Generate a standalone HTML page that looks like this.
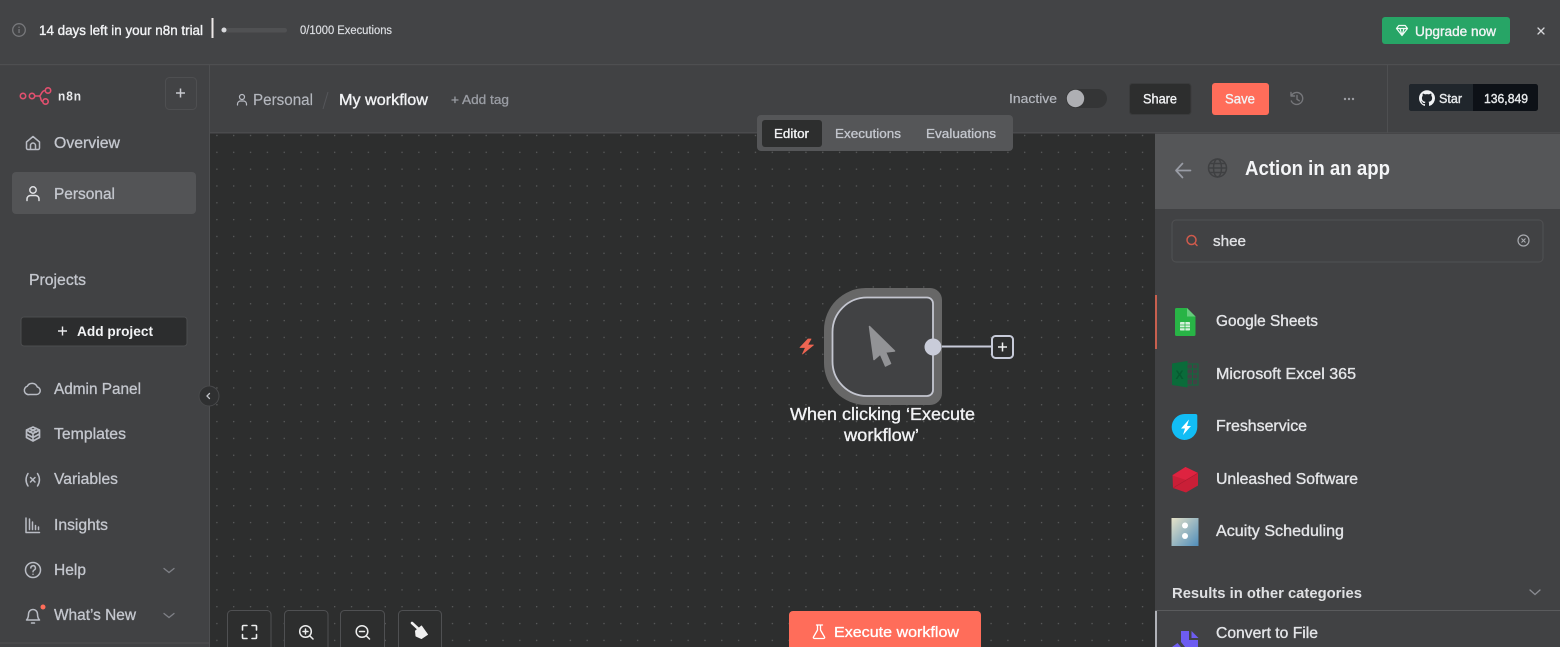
<!DOCTYPE html>
<html lang="en"><head><meta charset="utf-8"><title>n8n workflow</title>
<style>
html,body{margin:0;padding:0;width:1560px;height:647px;overflow:hidden;background:#414244}
svg{display:block;filter:blur(.35px)}
text{font-family:"Liberation Sans",sans-serif;fill:#c4c7ce;stroke:currentColor}
.m{stroke:#c4c7ce;stroke-width:.3}
.w{fill:#f2f3f5;stroke:#f2f3f5;stroke-width:.35}
.n{stroke:none}
.ic{fill:none;stroke:#b9bcc4;stroke-width:1.5;stroke-linecap:round;stroke-linejoin:round}
</style></head><body>
<svg width="1560" height="647" viewBox="0 0 1560 647" xmlns="http://www.w3.org/2000/svg">
<defs><pattern id="d" x="216.2" y="134.8" width="16.83" height="16.83" patternUnits="userSpaceOnUse"><circle cx=".7" cy=".7" r=".65" fill="#626364"/></pattern>
<linearGradient id="ac" x1="0" y1="0" x2="1" y2="1"><stop offset="0" stop-color="#e6e2c8"/><stop offset="1" stop-color="#4f8dbb"/></linearGradient></defs>
<rect width="1560" height="647" fill="#414244"/>
<rect width="1560" height="64" fill="#434446"/>
<rect y="64" width="1560" height="1.2" fill="#4e4f51"/>
<!-- canvas -->
<rect x="210" y="133" width="945" height="514" fill="#2d2e2e"/>
<rect x="210" y="133" width="945" height="514" fill="url(#d)"/>
<rect x="209" y="65" width="1" height="582" fill="#4e4f51"/>
<rect x="210" y="132" width="1350" height="1.5" fill="#4a4b4d"/>
<!-- top bar -->
<circle cx="19" cy="30" r="6.300" fill="none" stroke="#77787b" stroke-width="1.3"/><rect x="18.4" y="29" width="1.3" height="4" fill="#77787b"/><rect x="18.4" y="26.6" width="1.3" height="1.3" fill="#77787b"/>
<text x="39" y="35" font-size="13.500" textLength="164" lengthAdjust="spacingAndGlyphs" class="w">14 days left in your n8n trial</text>
<rect x="211.5" y="18" width="2" height="20" fill="#ece7e7"/>
<rect x="221" y="28" width="66" height="4.5" rx="2.2" fill="#505153"/><circle cx="224" cy="30" r="2.5" fill="#d8d9dc"/>
<text x="300" y="34" font-size="11.500" textLength="92" lengthAdjust="spacingAndGlyphs" class="m" style="fill:#dcdee2;stroke:#dcdee2;stroke-width:.2">0/1000 Executions</text>
<rect x="1382" y="17" width="128" height="27" rx="3" fill="#27a566"/>
<path d="M1396.500 28.500l2.300-3h6.400l2.300 3-5.500 7zM1396.500 28.500h11M1400 28.500l2 7 2-7" fill="none" stroke="#f1faf5" stroke-width="1.2" stroke-linejoin="round"/>
<text x="1415" y="36" font-size="13.500" textLength="81" lengthAdjust="spacingAndGlyphs" class="w">Upgrade now</text>
<path d="M1538 28l6 6M1544 28l-6 6" stroke="#d6d7da" stroke-width="1.3" stroke-linecap="round"/>
<!-- sidebar -->
<g fill="none" stroke="#e2506f" stroke-width="1.6"><circle cx="23" cy="96" r="2.700"/><circle cx="32" cy="96" r="2.700"/><circle cx="48" cy="90.500" r="2.700"/><circle cx="45.500" cy="101.500" r="2.700"/><path d="M35 96h4c2.500 0 2-5.500 6.300-5.500M39 96c2.500 0 1 5.500 3.800 5.500"/></g>
<text x="58" y="100.500" font-size="12.500" font-weight="bold" textLength="24" lengthAdjust="spacingAndGlyphs" class="n" style="fill:#e8e9eb;letter-spacing:1px">n8n</text>
<rect x="165.500" y="77.500" width="31" height="32" rx="4" fill="#424345" stroke="#4e4f51"/>
<path d="M180.500 88.500v9M176 93h9" stroke="#c8cacf" stroke-width="1.500"/>
<path class="ic" d="M26.500 142l6.500-5.500 6.500 5.500v6a1.500 1.500 0 0 1-1.500 1.500h-10a1.500 1.500 0 0 1-1.500-1.500zM30.500 149.500v-4a2.500 2.500 0 0 1 5 0v4"/>
<text x="54" y="148" font-size="15.500" textLength="66" lengthAdjust="spacingAndGlyphs" class="m">Overview</text>
<rect x="12" y="172" width="184" height="42" rx="4" fill="#535456"/>
<circle class="ic" style="stroke:#e0e1e4" cx="33" cy="190" r="3.200"/><path class="ic" style="stroke:#e0e1e4" d="M27 200.500v-1.500a3.500 3.500 0 0 1 3.500-3.500h5a3.500 3.500 0 0 1 3.500 3.500v1.500"/>
<text x="54" y="199" font-size="15.500" textLength="61" lengthAdjust="spacingAndGlyphs" class="m">Personal</text>
<text x="29" y="285" font-size="15.500" textLength="57" lengthAdjust="spacingAndGlyphs" class="m">Projects</text>
<rect x="21" y="317" width="166" height="29" rx="3" fill="#2c2d2e" stroke="#4c4d4f"/>
<path d="M62.500 326.500v9M58 331h9" stroke="#e8e9eb" stroke-width="1.400"/>
<text x="77" y="336" font-size="14" font-weight="bold" textLength="76" lengthAdjust="spacingAndGlyphs" class="n" style="fill:#f2f3f5">Add project</text>
<path class="ic" d="M29.500 394.500h7a3.800 3.800 0 0 0 .8-7.500 5.500 5.500 0 0 0-10-.8 4.300 4.300 0 0 0 2.200 8.300z"/>
<text x="54" y="394" font-size="15.500" textLength="87" lengthAdjust="spacingAndGlyphs" class="m">Admin Panel</text>
<path class="ic" style="stroke-width:1.700" d="M33 427l6.500 3v7.500L33 441l-6.500-3.500V430zM26.500 430l6.500 3.500 6.500-3.500M33 433.500V441M29.500 428.500l7 3.500M36.500 428.500l-7 3.500M26.500 434l6.500 3.500 6.500-3.500"/>
<text x="54" y="439" font-size="15.500" textLength="72" lengthAdjust="spacingAndGlyphs" class="m">Templates</text>
<path class="ic" d="M28 473.500c-2.500 4-2.500 8.500 0 12.500M37.500 473.500c2.500 4 2.500 8.500 0 12.500M30.500 477.500l4.500 4.500M35 477.500l-4.500 4.500"/>
<text x="54" y="484" font-size="15.500" textLength="64" lengthAdjust="spacingAndGlyphs" class="m">Variables</text>
<path class="ic" d="M26 518v14.500h13.500M29.500 519v10.500M32.500 522v7.500M35.500 525.500v4M38.500 527v2.500"/>
<text x="54" y="530" font-size="15.500" textLength="54" lengthAdjust="spacingAndGlyphs" class="m">Insights</text>
<circle class="ic" cx="33" cy="570" r="7.500"/><path class="ic" d="M30.800 568a2.300 2.300 0 1 1 3.400 2c-.8.500-1.200 1-1.200 1.800M33 574.200v.1"/>
<text x="54" y="575" font-size="15.500" textLength="32" lengthAdjust="spacingAndGlyphs" class="m">Help</text>
<path d="M164 568.500l5 4 5-4M164 613.500l5 4 5-4" fill="none" stroke="#7e8086" stroke-width="1.300" stroke-linecap="round"/>
<path class="ic" d="M26.500 620h13c-1.500-1.500-2-3-2-6a4.500 4.500 0 0 0-9 0c0 3-.5 4.500-2 6zM31.500 623h3"/><circle cx="43" cy="607" r="2.500" fill="#ff6d5a"/>
<text x="54" y="620" font-size="15.500" textLength="82" lengthAdjust="spacingAndGlyphs" class="m">What’s New</text>
<rect y="642.500" width="209" height="1" fill="#4e4f51"/>
<circle cx="209" cy="396" r="10" fill="#2f3031" stroke="#48494b"/><path d="M209.500 393.500l-2.500 2.500 2.500 2.500" fill="none" stroke="#c0c2c8" stroke-width="1.300" stroke-linecap="round"/>
<!-- header -->
<circle cx="242" cy="97" r="2.500" class="ic" style="stroke-width:1.200"/><path class="ic" style="stroke-width:1.200" d="M237.500 105v-1a3 3 0 0 1 3-3h3a3 3 0 0 1 3 3v1"/>
<text x="253" y="105" font-size="15.500" textLength="60" lengthAdjust="spacingAndGlyphs" style="stroke:#b4b7be;stroke-width:.15;fill:#b4b7be">Personal</text>
<path d="M328 92l-5 17" stroke="#55565a" stroke-width="1"/>
<text x="339" y="105" font-size="16" textLength="89" lengthAdjust="spacingAndGlyphs" class="w">My workflow</text>
<text x="451" y="104" font-size="13" textLength="58" lengthAdjust="spacingAndGlyphs" style="fill:#9a9da4;stroke:#9a9da4;stroke-width:.3">+ Add tag</text>
<text x="1009" y="103" font-size="13" textLength="48" lengthAdjust="spacingAndGlyphs" style="stroke:#b4b7be;stroke-width:.2;fill:#b4b7be">Inactive</text>
<rect x="1066" y="89" width="41" height="19" rx="9.500" fill="#343536"/><circle cx="1075.500" cy="98.500" r="8.700" fill="#aeafb3"/>
<rect x="1129.500" y="83.500" width="61.500" height="31" rx="3" fill="#2d2e2e" stroke="#3a3b3c"/>
<text x="1143" y="103.500" font-size="13.500" textLength="34" lengthAdjust="spacingAndGlyphs" class="w">Share</text>
<rect x="1212" y="83" width="57" height="32" rx="3" fill="#ff6d5a"/>
<text x="1225" y="103.500" font-size="13.500" textLength="30" lengthAdjust="spacingAndGlyphs" class="w">Save</text>
<path d="M1291.500 95.500a6 6 0 1 1-.2 5.500M1291 92.500v3.500h3.500M1297 95.500v3.800l2.300 1.500" fill="none" stroke="#76777b" stroke-width="1.400" stroke-linecap="round" stroke-linejoin="round"/>
<g fill="#9c9ea3"><circle cx="1345" cy="99" r="1.200"/><circle cx="1349" cy="99" r="1.200"/><circle cx="1353" cy="99" r="1.200"/></g>
<rect x="1387" y="65" width="1" height="68" fill="#4e4f51"/>
<rect x="1409" y="84" width="129" height="27" rx="2.500" fill="#0d1117"/>
<path d="M1411.500 84h61.500v27h-61.500a2.500 2.500 0 0 1-2.500-2.500v-22a2.500 2.500 0 0 1 2.500-2.500z" fill="#20262c"/>
<g transform="translate(1419 90.300)"><path fill="#f0f2f4" d="M8 0C3.580 0 0 3.580 0 8c0 3.540 2.290 6.530 5.470 7.590.4.070.55-.17.55-.38 0-.19-.01-.82-.01-1.490-2.010.37-2.530-.49-2.690-.94-.09-.23-.48-.94-.82-1.130-.28-.15-.68-.52-.01-.53.63-.01 1.080.58 1.230.82.720 1.210 1.870.87 2.330.66.070-.52.280-.87.510-1.070-1.780-.2-3.640-.89-3.640-3.950 0-.87.310-1.590.820-2.150-.08-.2-.36-1.020.08-2.120 0 0 .67-.21 2.200.82.640-.18 1.320-.27 2-.27s1.360.09 2 .27c1.530-1.040 2.200-.82 2.200-.82.440 1.100.16 1.920.08 2.120.51.560.82 1.270.82 2.150 0 3.070-1.870 3.750-3.650 3.950.29.25.54.73.54 1.480 0 1.070-.01 1.930-.01 2.200 0 .21.150.46.550.38A8.010 8.010 0 0 0 16 8c0-4.420-3.580-8-8-8z"/></g>
<text x="1439" y="103" font-size="12.500" textLength="23" lengthAdjust="spacingAndGlyphs" style="fill:#e6e8ea;stroke:#e6e8ea;stroke-width:.4">Star</text>
<text x="1484" y="103" font-size="12.500" textLength="44" lengthAdjust="spacingAndGlyphs" style="fill:#e6e8ea;stroke:#e6e8ea;stroke-width:.4">136,849</text>
<!-- tabs -->
<rect x="757" y="115" width="256" height="36" rx="4" fill="#555658"/>
<rect x="762" y="120" width="60" height="27" rx="3" fill="#2d2e2e"/>
<text x="774" y="138" font-size="13" textLength="35" lengthAdjust="spacingAndGlyphs" class="w">Editor</text>
<text x="835" y="138" font-size="13" textLength="66" lengthAdjust="spacingAndGlyphs" class="m">Executions</text>
<text x="926" y="138" font-size="13" textLength="70" lengthAdjust="spacingAndGlyphs" class="m">Evaluations</text>
<!-- node -->
<path d="M866 288h64a12 12 0 0 1 12 12v93a12 12 0 0 1-12 12h-64a42 42 0 0 1-42-42v-33a42 42 0 0 1 42-42z" fill="#676767"/>
<path d="M867 297.500h60a6 6 0 0 1 6 6v86.500a6 6 0 0 1-6 6h-60a34.500 34.500 0 0 1-34.500-34.500v-29.500a34.500 34.500 0 0 1 34.500-34.500z" fill="#414244" stroke="#c4c6d0" stroke-width="1.800"/>
<path d="M869.500 326.500l25 24.500-9 1 5 11.500-5 2.500-5.200-12-6.300 5.500z" fill="#929396" stroke="#929396" stroke-width="1.500" stroke-linejoin="round"/>
<path d="M942 346.500h49" stroke="#c7cbd9" stroke-width="2"/>
<circle cx="933" cy="347" r="8.500" fill="#c9ccd9"/>
<rect x="992" y="336" width="21" height="22" rx="3.500" fill="#2d2e2e" stroke="#c7cbd9" stroke-width="2"/>
<path d="M1002.500 342.500v9M998 347h9" stroke="#f0f0f0" stroke-width="1.500"/>
<path d="M808 339l-8 8.500h5.500l-3 6.500 11-9h-6l3.500-6z" fill="#ee6552" stroke="#ee6552" stroke-width=".8" stroke-linejoin="round"/>
<text x="790" y="420" font-size="17.500" textLength="185" lengthAdjust="spacingAndGlyphs" class="w">When clicking ‘Execute</text>
<text x="844" y="441" font-size="17.500" textLength="75" lengthAdjust="spacingAndGlyphs" class="w">workflow’</text>
<!-- canvas toolbar -->
<g fill="#2d2e2e" stroke="#4f5052"><rect x="227.500" y="610.500" width="43.500" height="50" rx="4"/><rect x="284.500" y="610.500" width="43.500" height="50" rx="4"/><rect x="340.500" y="610.500" width="44" height="50" rx="4"/><rect x="398.500" y="610.500" width="43" height="50" rx="4"/></g>
<path d="M242.500 630v-3.500a1 1 0 0 1 1-1h3.500M252 625.500h3.500a1 1 0 0 1 1 1v3.500M256.500 634.500v3a1 1 0 0 1-1 1H252M247 638.500h-3.500a1 1 0 0 1-1-1v-3" fill="none" stroke="#eceded" stroke-width="1.600" stroke-linecap="round"/>
<g fill="none" stroke="#eceded" stroke-width="1.500" stroke-linecap="round"><circle cx="305.500" cy="631.500" r="5.800"/><path d="M310 636l3 3M305.500 629v5M303 631.500h5"/><circle cx="362" cy="631.500" r="5.800"/><path d="M366.500 636l3 3M359.500 631.500h5"/></g>
<path d="M412 623l6 5.500" stroke="#f0f0f0" stroke-width="2.600" stroke-linecap="round"/>
<path d="M415.500 631l6-5 6 8.500-6 4-5.500-2.500z" fill="#f0f0f0" stroke="#f0f0f0" stroke-width="1" stroke-linejoin="round"/>
<!-- execute -->
<path d="M793 611h184a4 4 0 0 1 4 4v32h-192v-32a4 4 0 0 1 4-4z" fill="#ff6d5a"/>
<path d="M816.500 625h6M817.500 625v5l-4 7a1 1 0 0 0 1 1.500h9a1 1 0 0 0 1-1.500l-4-7v-5" fill="none" stroke="#fff" stroke-width="1.300" stroke-linejoin="round" stroke-linecap="round"/>
<text x="834" y="637" font-size="15" textLength="125" lengthAdjust="spacingAndGlyphs" style="fill:#fff;stroke:#fff;stroke-width:.3">Execute workflow</text>
<!-- right panel -->
<rect x="1155" y="134" width="405" height="513" fill="#414244"/>
<rect x="1155" y="134" width="405" height="75" fill="#555658"/>
<path d="M1190.500 170.500h-14.500M1182.500 163.500l-6.500 7 6.500 7" fill="none" stroke="#999ca5" stroke-width="1.700" stroke-linecap="round" stroke-linejoin="round"/>
<g fill="none" stroke="#3f4042" stroke-width="1.500"><circle cx="1217.500" cy="168" r="9"/><ellipse cx="1217.500" cy="168" rx="4" ry="9"/><path d="M1208.500 168h18M1210 163.500h15M1210 172.500h15"/></g>
<text x="1245" y="175" font-size="20.500" font-weight="bold" textLength="145" lengthAdjust="spacingAndGlyphs" class="n" style="fill:#f4f5f7">Action in an app</text>
<rect x="1172" y="220" width="371" height="42" rx="4" fill="#414244" stroke="#505153"/>
<circle cx="1191.500" cy="240" r="4.500" fill="none" stroke="#cf5a4c" stroke-width="1.500"/><path d="M1195 243.500l2 2" stroke="#cf5a4c" stroke-width="1.500" stroke-linecap="round"/>
<text x="1213" y="246" font-size="15" textLength="33" lengthAdjust="spacingAndGlyphs" class="w" style="fill:#dfe0e3;stroke:#dfe0e3">shee</text>
<circle cx="1523.500" cy="240.500" r="5.500" fill="none" stroke="#a8aaaf" stroke-width="1.200"/><path d="M1521.500 238.500l4 4M1525.500 238.500l-4 4" stroke="#a8aaaf" stroke-width="1.100"/>
<rect x="1155" y="295" width="2" height="54" fill="#c8604f"/>
<!-- list icons -->
<path d="M1176.500 308h10.500l8.500 8.500v18a1.500 1.500 0 0 1-1.500 1.500h-17.500a1.500 1.500 0 0 1-1.500-1.500v-25a1.500 1.500 0 0 1 1.500-1.500z" fill="#28b446"/><path d="M1187 308l8.500 8.500h-8.500z" fill="#66cc7d"/><rect x="1180" y="322" width="10" height="8.500" rx=".8" fill="#d5f0dc"/><path d="M1180 325h10M1180 327.800h10M1185 322v8.500" stroke="#28b446" stroke-width=".8"/>
<rect x="1183" y="364" width="15" height="21" fill="none" stroke="#0f6b3c" stroke-width="1"/><path d="M1187 369h11M1187 374h11M1187 379h11M1192.500 364v21" stroke="#0f6b3c" stroke-width=".9"/>
<path d="M1172 363.500l15.500-2.500v26.500l-15.500-2.500z" fill="#0a6b3a"/><text x="1175.500" y="379" font-size="12" font-weight="bold" class="n" style="fill:#075a30">X</text>
<path d="M1185 414h10.500a1.800 1.800 0 0 1 1.800 1.800V427a13 13 0 0 1-13 13 12.900 12.900 0 0 1-12.600-13 13 13 0 0 1 13.300-13z" fill="#12bdf5"/><path d="M1189 419.500l-8 9h4l-2 6.500 8-9h-4z" fill="#fff"/>
<path d="M1185.500 467l12.500 6v12.500l-12 7-13-4.500-.5-13z" fill="#c91f37"/><path d="M1185.500 467l12.500 6-12 7-13.500-4.500z" fill="#de2340"/><path d="M1173 488l25-15" stroke="#a81b30" stroke-width=".6" fill="none"/>
<rect x="1171.500" y="518" width="27" height="28" fill="url(#ac)"/><circle cx="1185" cy="525.500" r="3" fill="#fff"/><circle cx="1185" cy="536" r="3" fill="#fff"/>
<text x="1216" y="326" font-size="15.500" textLength="102" lengthAdjust="spacingAndGlyphs" class="w" style="fill:#e4e5e8;stroke:#e4e5e8">Google Sheets</text>
<text x="1216" y="379" font-size="15.500" textLength="140" lengthAdjust="spacingAndGlyphs" class="w" style="fill:#e4e5e8;stroke:#e4e5e8">Microsoft Excel 365</text>
<text x="1216" y="431" font-size="15.500" textLength="91" lengthAdjust="spacingAndGlyphs" class="w" style="fill:#e4e5e8;stroke:#e4e5e8">Freshservice</text>
<text x="1216" y="484" font-size="15.500" textLength="142" lengthAdjust="spacingAndGlyphs" class="w" style="fill:#e4e5e8;stroke:#e4e5e8">Unleashed Software</text>
<text x="1216" y="536" font-size="15.500" textLength="128" lengthAdjust="spacingAndGlyphs" class="w" style="fill:#e4e5e8;stroke:#e4e5e8">Acuity Scheduling</text>
<text x="1172" y="598" font-size="15" font-weight="bold" textLength="190" lengthAdjust="spacingAndGlyphs" class="n" style="fill:#dfe0e3">Results in other categories</text>
<path d="M1530 590l5 4.500 5-4.500" fill="none" stroke="#8a8c92" stroke-width="1.300" stroke-linecap="round"/>
<rect x="1155" y="610" width="405" height="1" fill="#5a5b5d"/>
<rect x="1155" y="611" width="2" height="36" fill="#b0b2b8"/>
<text x="1216" y="638" font-size="15.500" textLength="102" lengthAdjust="spacingAndGlyphs" class="w" style="fill:#e4e5e8;stroke:#e4e5e8">Convert to File</text>
<path d="M1181 631h8v9h9v7h-13l-4-5zM1172 647l5.500-4 3.500 4z" fill="#6d5cf0"/><path d="M1191.500 631l7 7h-7z" fill="#6d5cf0"/>
</svg>
</body></html>
